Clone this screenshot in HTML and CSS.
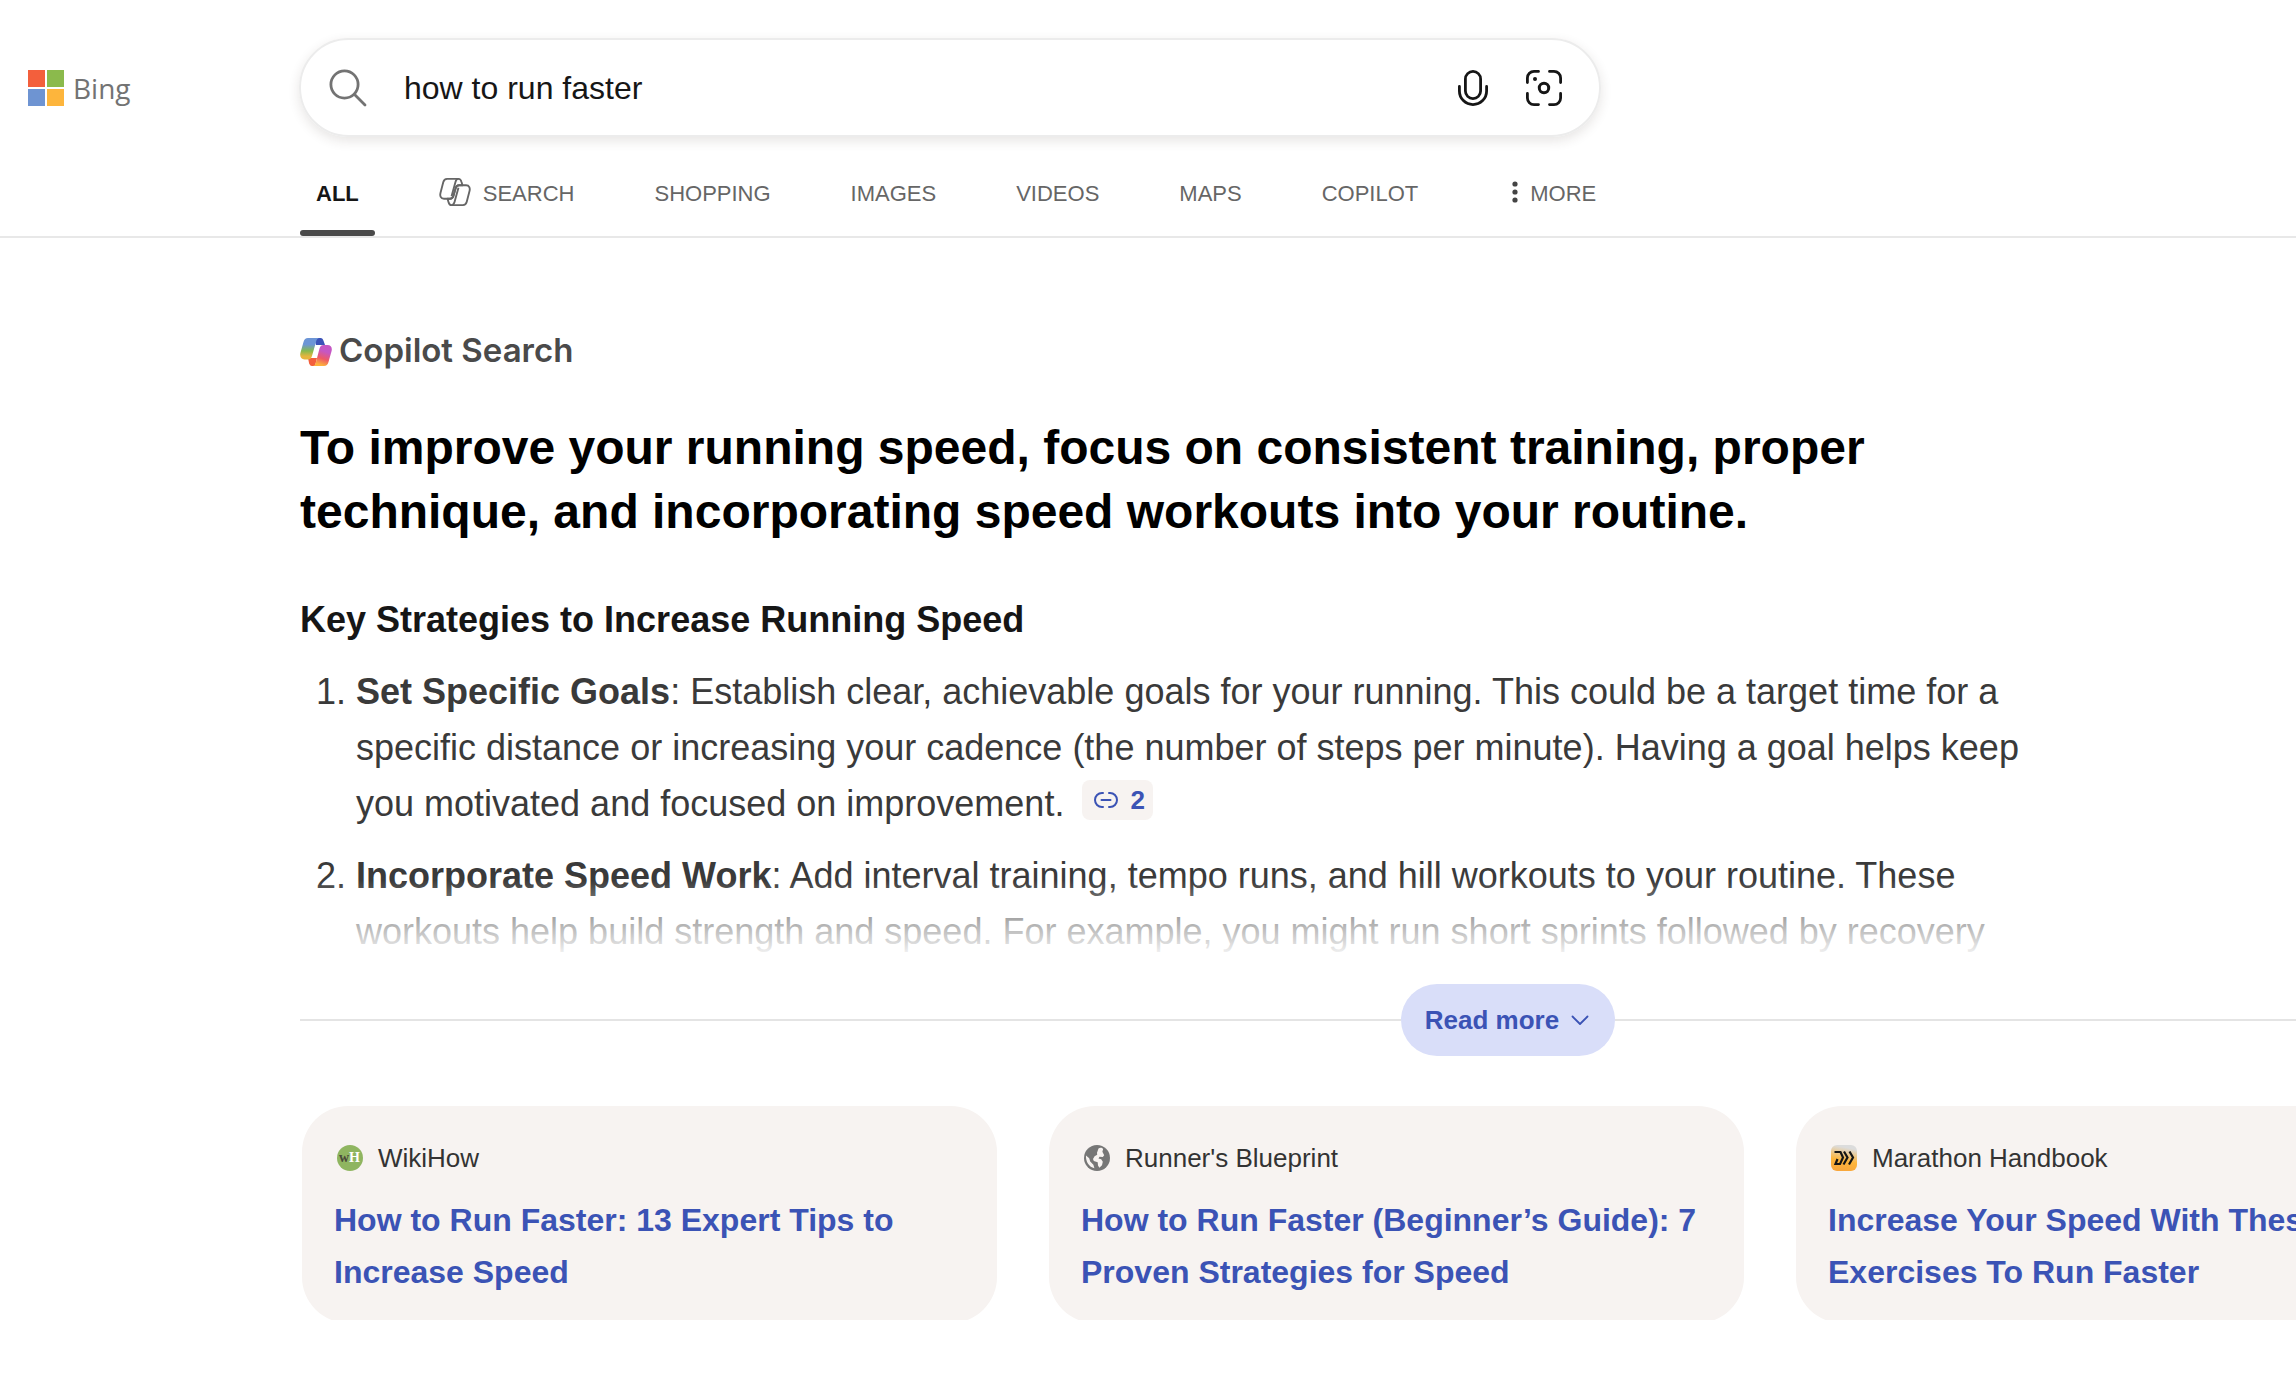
FILE: index.html
```html
<!DOCTYPE html>
<html lang="en">
<head>
  <meta charset="UTF-8">
  <meta name="viewport" content="width=device-width, initial-scale=1.0">
  <title>how to run faster - Bing</title>
  <link rel="stylesheet" href="styles.css">
</head>
<body>
  <header class="header">
    <div class="header-top">
      <a class="logo" href="#">
        <svg width="36" height="36" viewBox="0 0 36 36" aria-hidden="true">
          <path fill="#f35f3c" d="M0 0h17v17H0z"/>
          <path fill="#8bba4c" d="M19 0h17v17H19z"/>
          <path fill="#6e94d2" d="M0 19h17v17H0z"/>
          <path fill="#fdb53c" d="M19 19h17v17H19z"/>
        </svg>
        <span>Bing</span>
      </a>
      <form class="search-box" role="search">
        <svg class="search-icon" width="38" height="38" viewBox="0 0 38 38" fill="none" stroke="#737373" stroke-width="2.8" stroke-linecap="round" aria-hidden="true">
          <circle cx="15.5" cy="15.5" r="13.6"/>
          <path d="M25.3 25.3L36 36"/>
        </svg>
        <input type="text" id="searchInput" aria-label="Search" value="how to run faster">
        <button type="button" class="icon-btn" aria-label="Search using voice">
          <svg width="36" height="36" viewBox="0 0 36 36" fill="none" stroke="#161616" stroke-width="2.8" stroke-linecap="round">
            <rect x="10.4" y="1.4" width="15.2" height="27.2" rx="7.6"/>
            <path d="M4.4 16.5v4.500a13.600 13.600 0 0 0 27.200 0v-4.500"/>
          </svg>
        </button>
        <button type="button" class="icon-btn" aria-label="Search using an image">
          <svg width="36" height="36" viewBox="0 0 36 36" fill="none" stroke="#161616" stroke-width="2.8" stroke-linecap="round">
            <path d="M12.5 1.4H8a6.6 6.6 0 0 0-6.6 6.6v4.5M23.5 1.4H28a6.6 6.6 0 0 1 6.6 6.6v4.5M12.5 34.6H8A6.6 6.6 0 0 1 1.4 28v-4.5M23.5 34.6H28a6.6 6.6 0 0 0 6.6-6.6v-4.5"/>
            <circle cx="18" cy="18" r="4.7" stroke-width="3"/>
            <circle cx="9" cy="9" r="2" fill="#161616" stroke="none"/>
          </svg>
        </button>
      </form>
    </div>
    <nav class="tabs">
      <a class="tab active" href="#">ALL</a>
      <a class="tab" href="#">
        <svg width="32" height="28" viewBox="0 0 34 30" fill="none" stroke="#666" stroke-width="2" stroke-linejoin="round" aria-hidden="true">
          <path d="M8.500 1h12.300c1.700 0 2.700 1.500 3.200 3.400l1 3.400h-3.600c-2 0-3.300 1.400-3.800 3.400l-2.300 8c-.6 2-1.800 3-3.600 3H5.200c-3.600 0-4.600-3-3.700-6.500L4.400 4.600C5 2.300 6.300 1 8.500 1z"/>
          <path d="M25.500 29H13.200c-1.700 0-2.700-1.500-3.200-3.400l-1-3.400h2.700c1.800 0 3-1 3.600-3l2.300-8c.5-2 1.800-3.400 3.800-3.400h7.400c3.600 0 4.600 3 3.700 6.500l-2.900 11.100c-.6 2.300-1.900 3.600-4.100 3.600z"/>
          <path d="M20.800 1c-2 0-2.800 1.300-3.300 3.200l-4.200 15.300M13.200 29c2 0 2.800-1.300 3.300-3.200L20.700 10.500"/>
        </svg>
        SEARCH
      </a>
      <a class="tab" href="#">SHOPPING</a>
      <a class="tab" href="#">IMAGES</a>
      <a class="tab" href="#">VIDEOS</a>
      <a class="tab" href="#">MAPS</a>
      <a class="tab" href="#">COPILOT</a>
      <button type="button" class="tab more">
        <svg width="6" height="22" viewBox="0 0 6 22" fill="#444" aria-hidden="true">
          <circle cx="3" cy="3" r="2.600"/><circle cx="3" cy="11" r="2.600"/><circle cx="3" cy="19" r="2.600"/>
        </svg>
        MORE
      </button>
    </nav>
  </header>

  <main class="main">
    <section class="answer">
      <div class="copilot-logo">
        <svg width="32" height="28" viewBox="0 0 32 28" aria-hidden="true">
          <defs>
            <linearGradient id="gradLeft" x1="0" y1="0" x2="0" y2="1">
              <stop offset="0.300" stop-color="#6c95d6"/>
              <stop offset="0.600" stop-color="#86ba4d"/>
              <stop offset="0.850" stop-color="#e6b53e"/>
            </linearGradient>
            <linearGradient id="gradRight" x1="0.700" y1="0" x2="0.400" y2="1">
              <stop offset="0.300" stop-color="#c557c4"/>
              <stop offset="0.650" stop-color="#ee5a66"/>
              <stop offset="0.950" stop-color="#fdb03c"/>
            </linearGradient>
          </defs>
          <path fill="#3b52b8" d="M14 0h6.500c1.700 0 2.500 1.200 3 2.800L25 7h-9z"/>
          <path fill="#f35f3c" d="M8 20h9l-2 8h-3c-1.600 0-2.400-1.200-2.900-2.800z"/>
          <path fill="url(#gradLeft)" d="M8 0h11c-1.600.4-2.300 1.600-2.800 3.300L12 18c-.7 2.500-2 3.500-4 3.500H4.500C1 21.500-.4 18.500.4 15L3.500 4C4.200 1.500 5.600 0 8 0z"/>
          <path fill="url(#gradRight)" d="M24 28H13c1.600-.4 2.300-1.600 2.800-3.300L19.500 10.500C20.200 8 21.500 7 23.500 7h4c3.500 0 4.900 2.500 4.100 6l-3.100 11c-.7 2.500-2.100 4-4.500 4z"/>
        </svg>
        <span>Copilot Search</span>
      </div>

      <h1 class="summary">To improve your running speed, focus on consistent training, proper technique, and incorporating speed workouts into your routine.</h1>
      <div class="details">
        <h2 class="details-title">Key Strategies to Increase Running Speed</h2>
        <ol class="strategies">
          <li><strong>Set Specific Goals</strong>: Establish clear, achievable goals for your running. This could be a target time for a specific distance or increasing your cadence (the number of steps per minute). Having a goal helps keep you motivated and focused on improvement.
            <a class="citation" href="#">
              <svg width="24" height="16" viewBox="0 0 24 16" fill="none" stroke="#3b53b5" stroke-width="2" stroke-linecap="round" aria-hidden="true">
                <path d="M9 1H8a7 7 0 0 0 0 14h1M15 1h1a7 7 0 0 1 0 14h-1M7.500 8h9"/>
              </svg>
              2
            </a>
          </li>
          <li><strong>Incorporate Speed Work</strong>: Add interval training, tempo runs, and hill workouts to your routine. These workouts help build strength and speed. For example, you might run short sprints followed by recovery</li>
        </ol>
      </div>

      <div class="read-more">
        <button type="button" class="read-more-btn">
          Read more
          <svg width="18" height="11" viewBox="0 0 18 11" fill="none" stroke="#3b53b5" stroke-width="1.800" stroke-linecap="round" stroke-linejoin="round" aria-hidden="true">
            <path d="M1.500 1.500L9 9l7.500-7.500"/>
          </svg>
        </button>
      </div>

      <div class="sources">
        <article class="source">
          <div class="source-site">
            <svg width="26" height="26" viewBox="0 0 26 26" aria-hidden="true">
              <circle cx="13" cy="13" r="13" fill="#8fb560"/>
              <text x="2" y="17" class="wiki-w">w</text>
              <text x="12" y="17" class="wiki-h">H</text>
            </svg>
            <span>WikiHow</span>
          </div>
          <a class="source-title" href="#">How to Run Faster: 13 Expert Tips to Increase Speed</a>
        </article>
        <article class="source">
          <div class="source-site">
            <svg width="26" height="26" viewBox="0 0 26 26" aria-hidden="true">
              <circle cx="13" cy="13" r="13" fill="#767676"/>
              <path fill="#f7f3f1" d="M14.500 3.500c1.500-1.200 4-.8 4.500.5.300 1-.8 1.800-.5 3l1.700 3.200-1.400 1.800-3.300-.2-1 1.600 2.700.8 1.600 2.600-.8 3.400-2.600 2.600-1.400-2.300-.3-3.200-3.900-1.400-.8-2 1.600-2.700 2.600-1.500-.2-2z"/>
              <path fill="#f7f3f1" d="M2 10.500l3.200 2.700 1 3.400 3.200 3.200 1 3.400C5.200 22.200 1.500 16.500 2 10.500z"/>
            </svg>
            <span>Runner's Blueprint</span>
          </div>
          <a class="source-title" href="#">How to Run Faster (Beginner’s Guide): 7 Proven Strategies for Speed</a>
        </article>
        <article class="source">
          <div class="source-site">
            <svg width="26" height="26" viewBox="0 0 26 26" aria-hidden="true">
              <defs>
                <linearGradient id="gradMarathon" x1="0.600" y1="0" x2="0.400" y2="1">
                  <stop offset="0.100" stop-color="#dcdcdc"/>
                  <stop offset="0.600" stop-color="#fdb53c"/>
                  <stop offset="1" stop-color="#f8a63c"/>
                </linearGradient>
              </defs>
              <rect width="26" height="26" rx="6" fill="url(#gradMarathon)"/>
              <path fill="none" stroke="#161616" stroke-width="2.200" d="M3.500 7h6l2.500 5.500L9 19H4.500l2-5M13 6.500l3.500 6-4 7M18.500 6.500l3.500 6-4 7"/>
            </svg>
            <span>Marathon Handbook</span>
          </div>
          <a class="source-title" href="#">Increase Your Speed With These Exercises To Run Faster</a>
        </article>
      </div>
    </section>
  </main>
</body>
</html>
```
FILE: styles.css
```css
* {
  box-sizing: border-box;
}
body {
  margin: 0;
  font-family: "Liberation Sans", Arial, sans-serif;
  background: #fff;
  color: #161616;
}
a {
  color: inherit;
  text-decoration: none;
}
button {
  font: inherit;
  border: none;
  background: none;
  padding: 0;
  cursor: pointer;
}
svg {
  display: block;
  flex: none;
}

/* header */
.header {
  padding-top: 38px;
  border-bottom: 2px solid #e8e8e8;
}
.header-top {
  display: flex;
  align-items: center;
}
.logo {
  width: 299px;
  padding-left: 28px;
  display: flex;
  align-items: center;
  gap: 9px;
  flex: none;
  font-family: "Open Sans", sans-serif;
  font-size: 28px;
  font-weight: 500;
  line-height: 36px;
  color: #737373;
}
.search-box {
  flex: 0 1 1302px;
  height: 99px;
  display: flex;
  align-items: center;
  padding: 0 37px 0 28px;
  border: 2px solid #ececec;
  border-radius: 50px;
  box-shadow: 0 4px 12px rgba(60, 40, 30, 0.12);
}
.search-box input {
  flex: 1;
  min-width: 0;
  margin-left: 37px;
  padding: 2px 0 0;
  border: none;
  outline: none;
  background: none;
  font-family: inherit;
  font-size: 32px;
  color: #161616;
}
.icon-btn {
  margin-left: 35px;
}
.tabs {
  display: flex;
  gap: 48px;
  margin-left: 300px;
  padding-top: 24px;
}
.tab {
  display: flex;
  align-items: center;
  gap: 12px;
  height: 75px;
  padding: 2px 16px 12px;
  font-size: 22px;
  color: #666;
  white-space: nowrap;
}
.tab svg {
  margin-bottom: 4px;
}
.tab.active {
  position: relative;
  font-weight: bold;
  color: #161616;
}
.tab.active::after {
  content: "";
  position: absolute;
  left: 0;
  right: 0;
  bottom: 0;
  height: 6px;
  border-radius: 3px;
  background: #4a4a4a;
}
.more {
  margin-left: 14px;
}

/* copilot answer */
.main {
  padding: 94px 0 80px 300px;
  overflow: hidden;
}
.answer {
  width: 2416px;
}
.copilot-logo {
  display: flex;
  align-items: center;
  gap: 7px;
  height: 36px;
  font-family: Inter, sans-serif;
  font-size: 33px;
  font-weight: 600;
  color: #4a4a4a;
}
.copilot-logo svg {
  margin-top: 4px;
}
.summary {
  max-width: 1740px;
  margin: 48px 0 0;
  font-size: 48px;
  line-height: 64px;
  color: #000;
}
.details {
  position: relative;
  max-width: 1740px;
  margin-top: 48px;
}
.details::after {
  content: "";
  position: absolute;
  left: 0;
  right: 0;
  bottom: 0;
  height: 80px;
  background: linear-gradient(rgba(255, 255, 255, 0), rgba(255, 255, 255, 0.55) 48%, #fff);
}
.details-title {
  margin: 0;
  font-size: 36px;
  line-height: 56px;
}
.strategies {
  margin: 16px 0 0;
  padding-left: 56px;
  font-size: 36px;
  line-height: 56px;
  color: #3a3a3a;
}
.strategies li {
  margin-bottom: 16px;
}
.citation {
  display: inline-flex;
  align-items: center;
  gap: 12px;
  height: 40px;
  margin-left: 8px;
  padding: 0 8px 0 12px;
  border-radius: 8px;
  background: #f7f3f1;
  font-size: 26px;
  line-height: 40px;
  font-weight: bold;
  vertical-align: 8px;
  color: #3b53b5;
}
.read-more {
  display: flex;
  align-items: center;
  margin-top: 24px;
}
.read-more::before,
.read-more::after {
  content: "";
  flex: 1;
  height: 2px;
  background: #e4e4e4;
}
.read-more-btn {
  display: flex;
  align-items: center;
  gap: 12px;
  height: 72px;
  padding: 0 26px 0 24px;
  border-radius: 36px;
  background: #d9def9;
  font-size: 26px;
  font-weight: bold;
  color: #3b53b5;
}

/* source cards */
.sources {
  display: flex;
  gap: 52px;
  height: 214px;
  margin-top: 50px;
  padding-left: 2px;
  overflow: hidden;
}
.source {
  flex: none;
  width: 695px;
  height: 217px;
  padding: 36px 32px;
  border-radius: 46px;
  background: #f7f3f1;
}
.source-site {
  display: flex;
  align-items: center;
  gap: 15px;
  height: 32px;
  padding-left: 3px;
  font-size: 26px;
  color: #333;
}
.source-title {
  display: block;
  margin-top: 20px;
  font-size: 32px;
  line-height: 52px;
  font-weight: bold;
  color: #3b53b5;
}
.wiki-w,
.wiki-h {
  font-family: "Liberation Serif", serif;
  font-size: 14px;
  font-weight: bold;
  fill: #4a4a3a;
}
.wiki-h {
  fill: #fff;
}
```
